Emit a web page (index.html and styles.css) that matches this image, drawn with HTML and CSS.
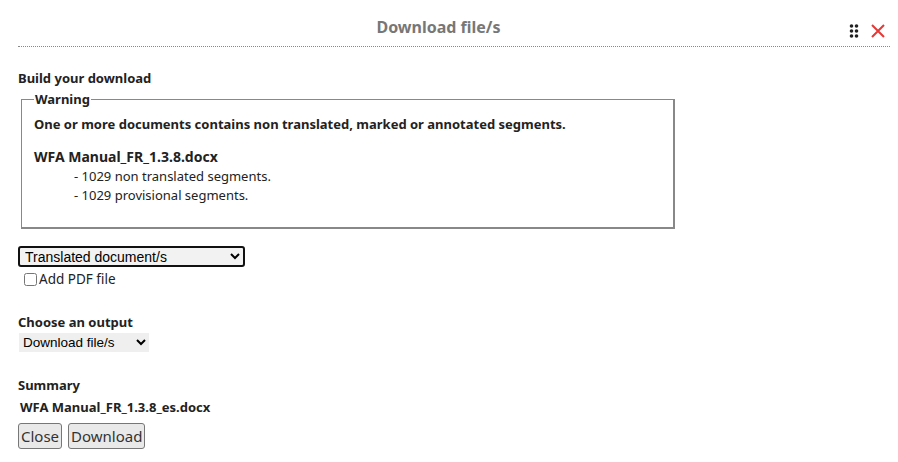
FILE: index.html
```html
<!DOCTYPE html>
<html lang="en">
<head>
  <meta charset="UTF-8">
  <title>Download file/s</title>
  <link rel="stylesheet" href="styles.css">
</head>
<body>
  <div class="dialog">
    <header class="dialog-head">
      <h1>Download file/s</h1>
      <div class="head-icons">
        <svg class="grip" width="10" height="16" viewBox="0 0 10 16">
          <circle cx="2.5" cy="3" r="1.8"/><circle cx="7.5" cy="3" r="1.8"/>
          <circle cx="2.5" cy="8" r="1.8"/><circle cx="7.5" cy="8" r="1.8"/>
          <circle cx="2.5" cy="13" r="1.8"/><circle cx="7.5" cy="13" r="1.8"/>
        </svg>
        <svg class="close" width="14" height="14" viewBox="0 0 14 14">
          <path d="M1 1 L13 13 M13 1 L1 13"/>
        </svg>
      </div>
    </header>

    <section class="block">
      <h2>Build your download</h2>
      <fieldset class="warning">
        <legend>Warning</legend>
        <p class="warn-msg">One or more documents contains non translated, marked or annotated segments.</p>
        <p class="doc-name">WFA Manual_FR_1.3.8.docx</p>
        <ul class="doc-issues">
          <li>- 1029 non translated segments.</li>
          <li>- 1029 provisional segments.</li>
        </ul>
      </fieldset>
    </section>

    <section class="block type-block">
      <select class="type-select">
        <option>Translated document/s</option>
      </select>
      <label class="pdf-check"><input type="checkbox"> Add PDF file</label>
    </section>

    <section class="block output-block">
      <h2>Choose an output</h2>
      <select class="output-select">
        <option>Download file/s</option>
      </select>
    </section>

    <section class="block summary-block">
      <h2>Summary</h2>
      <p class="summary-file">WFA Manual_FR_1.3.8_es.docx</p>
      <div class="actions">
        <button>Close</button>
        <button>Download</button>
      </div>
    </section>
  </div>
</body>
</html>
```

FILE: styles.css
```css
body { margin: 0; font-family: "Segoe UI", "Noto Sans", sans-serif; font-size: 13px; color: #222; background: #fff; }
.dialog { padding: 0 8px 0 18px; }
.dialog-head { display: flex; align-items: center; height: 47px; padding-top: 8px; box-sizing: border-box; border-bottom: 1px dotted #888; }
.dialog-head h1 { flex: 1; margin: 0; text-align: center; font-size: 16px; font-weight: bold; color: #777; padding-left: 10px; }
.head-icons { display: flex; align-items: center; gap: 12px; margin-top: 8px; padding-right: 5px; }
.grip { fill: #222; }
.close { stroke: #e53935; stroke-width: 2; }
.block h2 { font-size: 13px; font-weight: bold; margin: 0; }
.block:first-of-type { margin-top: 22px; }
.warning { margin: 3px 0 0 3px; width: 627px; padding: 0 12px 22px 12px; border: 1px solid #888; border-width: 1px 2px 2px 1px; }
.warning legend { font-weight: bold; padding: 0 1px; margin-left: 0; }
.warn-msg { font-weight: bold; margin: 7px 0 0 0; }
.doc-name { font-weight: bold; font-size: 14px; margin: 14px 0 0 0; }
.doc-issues { list-style: none; margin: 1px 0 0 0; padding: 0 0 0 40px; }
.doc-issues li { line-height: 19px; }
.type-block { margin-top: 17px; }
.type-select { display: block; font-family: "Liberation Sans", Arial, sans-serif; font-size: 14px; width: 227px; height: 21px; border: 2px solid #111; border-radius: 3px; background: #f2f2f2; padding: 0 0 0 1px; }
.pdf-check { display: flex; align-items: center; margin: 3px 0 0 6px; font-size: 13.5px; }
.pdf-check input { margin: 0 2px 0 0; width: 13px; height: 13px; }
.output-block { margin-top: 25px; }
.output-select { font-family: "Liberation Sans", Arial, sans-serif; font-size: 13.5px; margin: 2px 0 0 1px; width: 130px; height: 19px; border: none; background: #efefef; }
.summary-block { margin-top: 24px; }
.summary-file { font-weight: bold; margin: 4px 0 0 2px; font-size: 13px; }
.actions { display: flex; gap: 6px; margin-top: 7px; }
.actions button { font-family: "Segoe UI", "Noto Sans", sans-serif; font-size: 15px; padding: 0 2px; height: 26px; border: 1px solid #777; border-radius: 3px; background: #e9e9e9; color: #333; }
```
